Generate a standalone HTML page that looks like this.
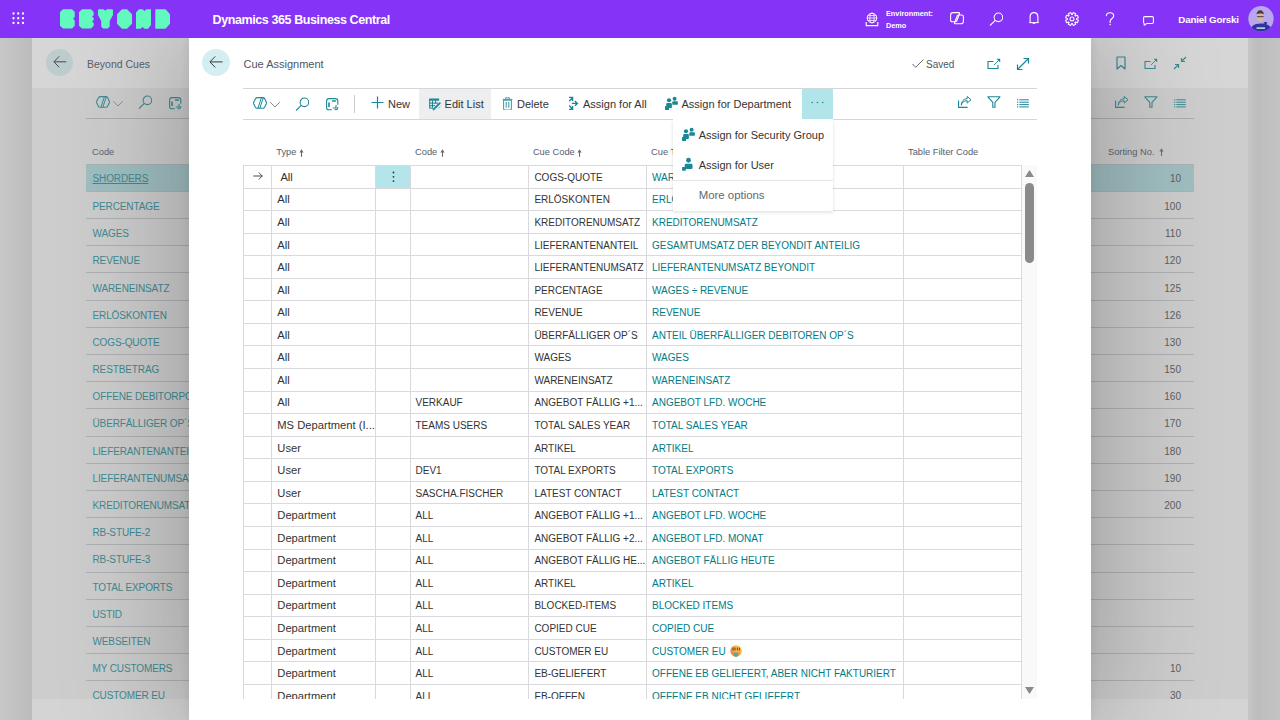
<!DOCTYPE html>
<html><head><meta charset="utf-8"><title>Cue Assignment</title>
<style>
html,body{margin:0;padding:0;width:1280px;height:720px;overflow:hidden;background:#bdbdbd;font-family:"Liberation Sans", sans-serif;}
.r{position:absolute;}
.t{position:absolute;white-space:nowrap;line-height:1;font-family:"Liberation Sans", sans-serif;}
.ar{font-size:0.85em;}
</style></head><body>
<div class="r" style="left:0px;top:38px;width:32px;height:682px;background:linear-gradient(to right,#c7c7c7,#bcbcbc);"></div>
<div class="r" style="left:1248px;top:38px;width:32px;height:682px;background:linear-gradient(to right,#c6c6c6,#bdbdbd 30%,#c3c3c3);"></div>
<div class="r" style="left:32px;top:38px;width:1216px;height:50px;background:#d6d6d6;"></div>
<div class="r" style="left:32px;top:88px;width:1216px;height:611px;background:#cdcdcd;"></div>
<div class="r" style="left:32px;top:699px;width:1216px;height:21px;background:#d4d4d4;"></div>
<div class="r" style="left:46px;top:49px;width:27px;height:27px;border-radius:50%;background:#bdcccd"></div>
<svg class="r" style="left:52.5px;top:55.5px" width="14" height="12" viewBox="0 0 14 12"><path d="M13.3 5.8H1M6.2 0.4L0.9 5.8 6.2 11.3" fill="none" stroke="#454545" stroke-width="0.95"/></svg>
<div class="t " style="left:87px;top:58.61px;font-size:10.5px;color:#5a616c;font-weight:400;">Beyond Cues</div>
<svg class="r" style="left:96px;top:96px" width="28" height="13" viewBox="0 0 28 13"><path d="M4.6,0.6 H10 Q11,0.6 11.6,1.6 L13.2,4.9 Q13.6,5.9 13.2,6.9 L11.6,10.2 Q11,11.2 10,11.2 H4 Q3,11.2 2.4,10.2 L0.8,6.9 Q0.4,5.9 0.8,4.9 L2.6,1.6 Q3.2,0.6 4.6,0.6Z" fill="none" stroke="#3b8a92" stroke-width="1.1" stroke-linejoin="round"/><path d="M8.4,0.8 L5,11 M10.3,0.9 L6.9,11" fill="none" stroke="#3b8a92" stroke-width="1"/><path d="M17.2 5.2l4.8 4.8 4.8-4.8" fill="none" stroke="#888" stroke-width="0.9"/></svg>
<svg class="r" style="left:138px;top:95px" width="14" height="14" viewBox="0 0 14 14"><circle cx="9.4" cy="5.3" r="4.3" fill="none" stroke="#3b8a92" stroke-width="1.05"/><path d="M6.3 8.4L1 13.5" stroke="#3b8a92" stroke-width="1.1"/></svg>
<svg class="r" style="left:169px;top:96.8px" width="13" height="13" viewBox="0 0 13 13"><path d="M3,0.6 H9.4 Q11.8,0.6 11.8,3 V6.8 M11.8,9.3 Q11.8,11.8 9.4,11.8 H8.6 M5.8,11.8 H3 Q0.6,11.8 0.6,9.4 V3 Q0.6,0.6 3,0.6" fill="none" stroke="#3b8a92" stroke-width="1.1"/><rect x="5.8" y="2.2" width="4.3" height="1.6" rx="0.8" fill="#3b8a92"/><rect x="2.2" y="4.3" width="1.6" height="5" rx="0.8" fill="#3b8a92"/><path d="M6.8 10H10V6.9" fill="none" stroke="#3b8a92" stroke-width="1.1"/></svg>
<div class="r" style="left:86px;top:118px;width:110px;height:1px;background:#a9acb0;"></div>
<svg class="r" style="left:1115px;top:56px" width="12" height="14" viewBox="0 0 12 14"><path d="M2 1h8v12l-4-3.5L2 13z" fill="none" stroke="#3b8a92" stroke-width="1.2" stroke-linejoin="round"/></svg>
<svg class="r" style="left:1143.5px;top:57.5px" width="14" height="12" viewBox="0 0 14 12"><path d="M6.5 3.5H1v7h10V7" fill="none" stroke="#3b8a92" stroke-width="1.1"/><path d="M7 7l5.5-5.5" fill="none" stroke="#3b8a92" stroke-width="0.9"/><path d="M9.5 0.8h3.7v3.7z" fill="#3b8a92"/></svg>
<svg class="r" style="left:1173px;top:56px" width="14" height="14" viewBox="0 0 14 14"><path d="M1 13l4.5-4.5M2 8.5h3.5V12M13 1L8.5 5.5M8.5 2v3.5H12" fill="none" stroke="#3b8a92" stroke-width="1.2"/></svg>
<svg class="r" style="left:1115px;top:96px" width="14" height="12" viewBox="0 0 14 12"><path d="M0.6 4.5v6.9h9" fill="none" stroke="#3b8a92" stroke-width="1.1"/><path d="M3.3 9.3c0.4-3 2.5-4.6 5.9-4.6v2.4l3.8-3.4L9.2 0.5v2.2C5.5 2.9 3.3 5.5 3.3 9.3z" fill="none" stroke="#3b8a92" stroke-width="1" stroke-linejoin="round"/></svg>
<svg class="r" style="left:1143.5px;top:96.3px" width="14" height="12" viewBox="0 0 14 12"><path d="M0.8 0.8h12.2L8 6.3v5H5.8v-5z" fill="none" stroke="#3b8a92" stroke-width="1.1" stroke-linejoin="round"/></svg>
<svg class="r" style="left:1174px;top:99.3px" width="12" height="9" viewBox="0 0 12 9"><rect x="0" y="0.3" width="1.3" height="1" fill="#3b8a92"/><rect x="2.3" y="0.3" width="9.5" height="1" fill="#3b8a92"/><rect x="0" y="2.7" width="1.3" height="1" fill="#3b8a92"/><rect x="2.3" y="2.7" width="9.5" height="1" fill="#3b8a92"/><rect x="0" y="5.1" width="1.3" height="1" fill="#3b8a92"/><rect x="2.3" y="5.1" width="9.5" height="1" fill="#3b8a92"/><rect x="0" y="7.4" width="1.3" height="1" fill="#3b8a92"/><rect x="2.3" y="7.4" width="9.5" height="1" fill="#3b8a92"/></svg>
<div class="r" style="left:1091px;top:118px;width:103px;height:1px;background:#a9acb0;"></div>
<div class="t " style="left:92px;top:148.13px;font-size:9.3px;color:#5e636b;font-weight:400;">Code</div>
<div class="t " style="left:1108px;top:148.13px;font-size:9.3px;color:#5e636b;font-weight:400;">Sorting No.</div>
<svg class="r" style="left:1158.5px;top:148.3px" width="5" height="8" viewBox="0 0 5 8"><path d="M2.5 7.8V2" stroke="#707070" stroke-width="1.1"/><path d="M0.4 3.4L2.5 0.3 4.6 3.4z" fill="#707070"/></svg>
<div class="r" style="left:0;top:0;width:1280px;height:699px;overflow:hidden">
<div class="r" style="left:86px;top:164px;width:1108px;height:27px;background:#a0bec1;"></div>
<div class="r" style="left:86px;top:164px;width:1108px;height:1px;background:#a9b0b4;"></div>
<div class="r" style="left:86px;top:191px;width:1108px;height:1px;background:#aeb0b3;"></div>
<div class="t " style="left:92.5px;top:173.93px;font-size:10px;color:#3f8a91;font-weight:400;text-decoration:underline;letter-spacing:-0.12px;">SHORDERS</div>
<div class="t" style="right:99px;top:173.93px;font-size:10px;color:#5f5f5f;font-weight:400;">10</div>
<div class="r" style="left:86px;top:218px;width:1108px;height:1px;background:#aeb0b3;"></div>
<div class="t " style="left:92.5px;top:201.93px;font-size:10px;color:#3f8a91;font-weight:400;letter-spacing:-0.12px;">PERCENTAGE</div>
<div class="t" style="right:99px;top:201.93px;font-size:10px;color:#5f5f5f;font-weight:400;">100</div>
<div class="r" style="left:86px;top:245px;width:1108px;height:1px;background:#aeb0b3;"></div>
<div class="t " style="left:92.5px;top:229.12px;font-size:10px;color:#3f8a91;font-weight:400;letter-spacing:-0.12px;">WAGES</div>
<div class="t" style="right:99px;top:229.12px;font-size:10px;color:#5f5f5f;font-weight:400;">110</div>
<div class="r" style="left:86px;top:272px;width:1108px;height:1px;background:#aeb0b3;"></div>
<div class="t " style="left:92.5px;top:256.31px;font-size:10px;color:#3f8a91;font-weight:400;letter-spacing:-0.12px;">REVENUE</div>
<div class="t" style="right:99px;top:256.31px;font-size:10px;color:#5f5f5f;font-weight:400;">120</div>
<div class="r" style="left:86px;top:300px;width:1108px;height:1px;background:#aeb0b3;"></div>
<div class="t " style="left:92.5px;top:283.50px;font-size:10px;color:#3f8a91;font-weight:400;letter-spacing:-0.12px;">WARENEINSATZ</div>
<div class="t" style="right:99px;top:283.50px;font-size:10px;color:#5f5f5f;font-weight:400;">125</div>
<div class="r" style="left:86px;top:327px;width:1108px;height:1px;background:#aeb0b3;"></div>
<div class="t " style="left:92.5px;top:310.69px;font-size:10px;color:#3f8a91;font-weight:400;letter-spacing:-0.12px;">ERLÖSKONTEN</div>
<div class="t" style="right:99px;top:310.69px;font-size:10px;color:#5f5f5f;font-weight:400;">126</div>
<div class="r" style="left:86px;top:354px;width:1108px;height:1px;background:#aeb0b3;"></div>
<div class="t " style="left:92.5px;top:337.88px;font-size:10px;color:#3f8a91;font-weight:400;letter-spacing:-0.12px;">COGS-QUOTE</div>
<div class="t" style="right:99px;top:337.88px;font-size:10px;color:#5f5f5f;font-weight:400;">130</div>
<div class="r" style="left:86px;top:381px;width:1108px;height:1px;background:#aeb0b3;"></div>
<div class="t " style="left:92.5px;top:365.08px;font-size:10px;color:#3f8a91;font-weight:400;letter-spacing:-0.12px;">RESTBETRAG</div>
<div class="t" style="right:99px;top:365.08px;font-size:10px;color:#5f5f5f;font-weight:400;">150</div>
<div class="r" style="left:86px;top:408px;width:1108px;height:1px;background:#aeb0b3;"></div>
<div class="t " style="left:92.5px;top:392.26px;font-size:10px;color:#3f8a91;font-weight:400;letter-spacing:-0.12px;">OFFENE DEBITORPOSTEN</div>
<div class="t" style="right:99px;top:392.26px;font-size:10px;color:#5f5f5f;font-weight:400;">160</div>
<div class="r" style="left:86px;top:436px;width:1108px;height:1px;background:#aeb0b3;"></div>
<div class="t " style="left:92.5px;top:419.46px;font-size:10px;color:#3f8a91;font-weight:400;letter-spacing:-0.12px;">ÜBERFÄLLIGER OP´S</div>
<div class="t" style="right:99px;top:419.46px;font-size:10px;color:#5f5f5f;font-weight:400;">170</div>
<div class="r" style="left:86px;top:463px;width:1108px;height:1px;background:#aeb0b3;"></div>
<div class="t " style="left:92.5px;top:446.64px;font-size:10px;color:#3f8a91;font-weight:400;letter-spacing:-0.12px;">LIEFERANTENANTEIL</div>
<div class="t" style="right:99px;top:446.64px;font-size:10px;color:#5f5f5f;font-weight:400;">180</div>
<div class="r" style="left:86px;top:490px;width:1108px;height:1px;background:#aeb0b3;"></div>
<div class="t " style="left:92.5px;top:473.84px;font-size:10px;color:#3f8a91;font-weight:400;letter-spacing:-0.12px;">LIEFERANTENUMSATZ</div>
<div class="t" style="right:99px;top:473.84px;font-size:10px;color:#5f5f5f;font-weight:400;">190</div>
<div class="r" style="left:86px;top:517px;width:1108px;height:1px;background:#aeb0b3;"></div>
<div class="t " style="left:92.5px;top:501.03px;font-size:10px;color:#3f8a91;font-weight:400;letter-spacing:-0.12px;">KREDITORENUMSATZ</div>
<div class="t" style="right:99px;top:501.03px;font-size:10px;color:#5f5f5f;font-weight:400;">200</div>
<div class="r" style="left:86px;top:544px;width:1108px;height:1px;background:#aeb0b3;"></div>
<div class="t " style="left:92.5px;top:528.22px;font-size:10px;color:#3f8a91;font-weight:400;letter-spacing:-0.12px;">RB-STUFE-2</div>
<div class="r" style="left:86px;top:572px;width:1108px;height:1px;background:#aeb0b3;"></div>
<div class="t " style="left:92.5px;top:555.41px;font-size:10px;color:#3f8a91;font-weight:400;letter-spacing:-0.12px;">RB-STUFE-3</div>
<div class="r" style="left:86px;top:599px;width:1108px;height:1px;background:#aeb0b3;"></div>
<div class="t " style="left:92.5px;top:582.60px;font-size:10px;color:#3f8a91;font-weight:400;letter-spacing:-0.12px;">TOTAL EXPORTS</div>
<div class="r" style="left:86px;top:626px;width:1108px;height:1px;background:#aeb0b3;"></div>
<div class="t " style="left:92.5px;top:609.78px;font-size:10px;color:#3f8a91;font-weight:400;letter-spacing:-0.12px;">USTID</div>
<div class="r" style="left:86px;top:653px;width:1108px;height:1px;background:#aeb0b3;"></div>
<div class="t " style="left:92.5px;top:636.98px;font-size:10px;color:#3f8a91;font-weight:400;letter-spacing:-0.12px;">WEBSEITEN</div>
<div class="r" style="left:86px;top:680px;width:1108px;height:1px;background:#aeb0b3;"></div>
<div class="t " style="left:92.5px;top:664.17px;font-size:10px;color:#3f8a91;font-weight:400;letter-spacing:-0.12px;">MY CUSTOMERS</div>
<div class="t" style="right:99px;top:664.17px;font-size:10px;color:#5f5f5f;font-weight:400;">10</div>
<div class="r" style="left:86px;top:708px;width:1108px;height:1px;background:#aeb0b3;"></div>
<div class="t " style="left:92.5px;top:691.36px;font-size:10px;color:#3f8a91;font-weight:400;letter-spacing:-0.12px;">CUSTOMER EU</div>
<div class="t" style="right:99px;top:691.36px;font-size:10px;color:#5f5f5f;font-weight:400;">30</div>
</div>
<div class="r" style="left:189px;top:38px;width:902px;height:682px;box-shadow:0 0 110px 10px rgba(0,0,0,0.25),0 0 10px rgba(0,0,0,0.07);background:#fff"></div>
<div class="r" style="left:202px;top:49px;width:28px;height:27px;border-radius:50%;background:#d5eef1"></div>
<svg class="r" style="left:209px;top:55.5px" width="14" height="12" viewBox="0 0 14 12"><path d="M13.6 5.9H1M6.3 0.4L0.9 5.9 6.3 11.5" fill="none" stroke="#333" stroke-width="0.95"/></svg>
<div class="t " style="left:243.5px;top:58.69px;font-size:11px;color:#4d5663;font-weight:400;">Cue Assignment</div>
<svg class="r" style="left:912px;top:59px" width="12" height="9" viewBox="0 0 12 9"><path d="M0.5 5l3.2 3.3L11.5 0.5" fill="none" stroke="#555" stroke-width="0.9"/></svg>
<div class="t " style="left:926px;top:60.03px;font-size:10px;color:#4d5663;font-weight:400;">Saved</div>
<svg class="r" style="left:986.5px;top:57.5px" width="14" height="12" viewBox="0 0 14 12"><path d="M6.5 3.5H1v7h10V7" fill="none" stroke="#1a8796" stroke-width="1.1"/><path d="M7 7l5.5-5.5" fill="none" stroke="#1a8796" stroke-width="0.9"/><path d="M9.5 0.8h3.7v3.7z" fill="#1a8796"/></svg>
<svg class="r" style="left:1016px;top:57px" width="14" height="14" viewBox="0 0 14 14"><path d="M1.5 12.5l11-11M7.5 1.5h5v5M1.5 7.5v5h5" fill="none" stroke="#1a8796" stroke-width="1.2"/></svg>
<div class="r" style="left:243px;top:88px;width:794px;height:1px;background:#d3d6da;"></div>
<div class="r" style="left:243px;top:119px;width:794px;height:1px;background:#d3d6da;"></div>
<svg class="r" style="left:253px;top:97px" width="28" height="13" viewBox="0 0 28 13"><path d="M4.6,0.6 H10 Q11,0.6 11.6,1.6 L13.2,4.9 Q13.6,5.9 13.2,6.9 L11.6,10.2 Q11,11.2 10,11.2 H4 Q3,11.2 2.4,10.2 L0.8,6.9 Q0.4,5.9 0.8,4.9 L2.6,1.6 Q3.2,0.6 4.6,0.6Z" fill="none" stroke="#1a8796" stroke-width="1.1" stroke-linejoin="round"/><path d="M8.4,0.8 L5,11 M10.3,0.9 L6.9,11" fill="none" stroke="#1a8796" stroke-width="1"/><path d="M17.2 5.2l4.8 4.8 4.8-4.8" fill="none" stroke="#777" stroke-width="0.9"/></svg>
<svg class="r" style="left:295px;top:96.5px" width="14" height="14" viewBox="0 0 14 14"><circle cx="9.4" cy="5.3" r="4.3" fill="none" stroke="#1a8796" stroke-width="1.05"/><path d="M6.3 8.4L1 13.5" stroke="#1a8796" stroke-width="1.1"/></svg>
<svg class="r" style="left:326px;top:98px" width="13" height="13" viewBox="0 0 13 13"><path d="M3,0.6 H9.4 Q11.8,0.6 11.8,3 V6.8 M11.8,9.3 Q11.8,11.8 9.4,11.8 H8.6 M5.8,11.8 H3 Q0.6,11.8 0.6,9.4 V3 Q0.6,0.6 3,0.6" fill="none" stroke="#1a8796" stroke-width="1.1"/><rect x="5.8" y="2.2" width="4.3" height="1.6" rx="0.8" fill="#1a8796"/><rect x="2.2" y="4.3" width="1.6" height="5" rx="0.8" fill="#1a8796"/><path d="M6.8 10H10V6.9" fill="none" stroke="#1a8796" stroke-width="1.1"/></svg>
<div class="r" style="left:354px;top:95px;width:1px;height:18px;background:#c8cbcf;"></div>
<svg class="r" style="left:371px;top:96px" width="13" height="13" viewBox="0 0 13 13"><path d="M6.5 0.5v12M0.5 6.5h12" stroke="#1a8796" stroke-width="1.2"/></svg>
<div class="t " style="left:388px;top:98.99px;font-size:11px;color:#333;font-weight:400;">New</div>
<div class="r" style="left:419px;top:89px;width:72px;height:30px;background:#eceef0;"></div>
<svg class="r" style="left:426px;top:95px" width="18" height="17" viewBox="0 0 18 17"><rect x="3.1" y="3.5" width="10" height="2.2" fill="#1a8796"/><path d="M3.7 5V13.3M6.5 5.5V13.3M9.6 5.5V8.6M3.2 8.1H12M3.2 10.6H9M3.2 13H7" stroke="#1a8796" stroke-width="1" fill="none"/><path d="M7.6 14.4L13.8 8.2" stroke="#1a8796" stroke-width="1.9" stroke-linecap="round"/><path d="M12.3 13.5L14.2 11.6" stroke="#1a8796" stroke-width="1" opacity="0.6"/></svg>
<div class="t " style="left:444.6px;top:98.99px;font-size:11px;color:#333;font-weight:400;">Edit List</div>
<svg class="r" style="left:501.5px;top:96.5px" width="11" height="13.5" viewBox="0 0 11 13.5"><path d="M0.6 2.4h9.8M3.6 2.2V0.8h3.8v1.4" fill="none" stroke="#3f9ea8" stroke-width="1"/><path d="M1.6 3.2h7.8v8.3q0 1.4-1.4 1.4H3q-1.4 0-1.4-1.4z" fill="none" stroke="#3f9ea8" stroke-width="1.05"/><path d="M4.2 5v5.8M6.8 5v5.8" stroke="#3f9ea8" stroke-width="1.1"/></svg>
<div class="t " style="left:517px;top:98.99px;font-size:11px;color:#333;font-weight:400;">Delete</div>
<svg class="r" style="left:565px;top:94px" width="16" height="18" viewBox="0 0 16 18"><path d="M4.3 7.3L7.4 3.6M4.1 3.4H7.6V6.9M6.9 9.4H12.3M9.9 7L12.4 9.4 9.9 11.8M4.3 11.5L7.4 15.2M4.1 15.4H7.6V11.9" fill="none" stroke="#1a8796" stroke-width="1.35"/></svg>
<div class="t " style="left:583px;top:98.99px;font-size:11px;color:#333;font-weight:400;">Assign for All</div>
<svg class="r" style="left:664px;top:96px" width="15" height="15" viewBox="0 0 15 15"><circle cx="5" cy="4.25" r="2.1" fill="#1a8796"/><path d="M2.2 7.9Q2.2 7 3.2 7H6.9Q7.9 7 7.9 8V11.2Q7.9 12 7 12H2.2z" fill="#1a8796"/><rect x="1" y="10" width="4" height="3.9" rx="0.5" fill="#1a8796"/><circle cx="10.6" cy="2.75" r="2" fill="#1a8796"/><path d="M8.3 6.2Q8.3 5.25 9.3 5.25H12.9Q13.9 5.25 13.9 6.2V7.9Q13.9 8.75 13 8.75H8.3z" fill="#1a8796"/></svg>
<div class="t " style="left:681.5px;top:98.99px;font-size:11px;color:#333;font-weight:400;">Assign for Department</div>
<div class="r" style="left:802px;top:89px;width:31px;height:30px;background:#b2e5ea;"></div>
<svg class="r" style="left:811px;top:101px" width="13" height="3" viewBox="0 0 13 3"><circle cx="1.2" cy="1.5" r="0.8" fill="#1a8796"/><circle cx="6.5" cy="1.5" r="0.8" fill="#1a8796"/><circle cx="11.8" cy="1.5" r="0.8" fill="#1a8796"/></svg>
<svg class="r" style="left:958px;top:96px" width="14" height="12" viewBox="0 0 14 12"><path d="M0.6 4.5v6.9h9" fill="none" stroke="#1a8796" stroke-width="1.1"/><path d="M3.3 9.3c0.4-3 2.5-4.6 5.9-4.6v2.4l3.8-3.4L9.2 0.5v2.2C5.5 2.9 3.3 5.5 3.3 9.3z" fill="none" stroke="#1a8796" stroke-width="1" stroke-linejoin="round"/></svg>
<svg class="r" style="left:986.5px;top:96.3px" width="14" height="12" viewBox="0 0 14 12"><path d="M0.8 0.8h12.2L8 6.3v5H5.8v-5z" fill="none" stroke="#1a8796" stroke-width="1.1" stroke-linejoin="round"/></svg>
<svg class="r" style="left:1017px;top:99.3px" width="12" height="9" viewBox="0 0 12 9"><rect x="0" y="0.3" width="1.3" height="1" fill="#1a8796"/><rect x="2.3" y="0.3" width="9.5" height="1" fill="#1a8796"/><rect x="0" y="2.7" width="1.3" height="1" fill="#1a8796"/><rect x="2.3" y="2.7" width="9.5" height="1" fill="#1a8796"/><rect x="0" y="5.1" width="1.3" height="1" fill="#1a8796"/><rect x="2.3" y="5.1" width="9.5" height="1" fill="#1a8796"/><rect x="0" y="7.4" width="1.3" height="1" fill="#1a8796"/><rect x="2.3" y="7.4" width="9.5" height="1" fill="#1a8796"/></svg>
<div class="t " style="left:276.3px;top:148.43px;font-size:9.3px;color:#545e6b;font-weight:400;">Type</div>
<svg class="r" style="left:298.5px;top:148.5px" width="5" height="8" viewBox="0 0 5 8"><path d="M2.5 7.8V2" stroke="#6a6a6a" stroke-width="1.1"/><path d="M0.4 3.4L2.5 0.3 4.6 3.4z" fill="#6a6a6a"/></svg>
<div class="t " style="left:415px;top:148.43px;font-size:9.3px;color:#545e6b;font-weight:400;">Code</div>
<svg class="r" style="left:440px;top:148.5px" width="5" height="8" viewBox="0 0 5 8"><path d="M2.5 7.8V2" stroke="#6a6a6a" stroke-width="1.1"/><path d="M0.4 3.4L2.5 0.3 4.6 3.4z" fill="#6a6a6a"/></svg>
<div class="t " style="left:532.9px;top:148.43px;font-size:9.3px;color:#545e6b;font-weight:400;">Cue Code</div>
<svg class="r" style="left:576.8px;top:148.5px" width="5" height="8" viewBox="0 0 5 8"><path d="M2.5 7.8V2" stroke="#6a6a6a" stroke-width="1.1"/><path d="M0.4 3.4L2.5 0.3 4.6 3.4z" fill="#6a6a6a"/></svg>
<div class="t " style="left:651px;top:148.43px;font-size:9.3px;color:#545e6b;font-weight:400;">Cue Title</div>
<div class="t " style="left:908px;top:148.43px;font-size:9.3px;color:#545e6b;font-weight:400;">Table Filter Code</div>
<div class="r" style="left:0;top:0;width:1280px;height:699px;overflow:hidden">
<div class="r" style="left:376px;top:166px;width:34px;height:22px;background:#b3e5ea;"></div>
<svg class="r" style="left:392px;top:171px" width="3" height="12" viewBox="0 0 3 12"><circle cx="1.5" cy="1.5" r="0.9" fill="#333"/><circle cx="1.5" cy="5.8" r="0.9" fill="#333"/><circle cx="1.5" cy="10.1" r="0.9" fill="#333"/></svg>
<svg class="r" style="left:252.5px;top:172px" width="10" height="8" viewBox="0 0 10 8"><path d="M0.3 4h9M5.8 0.5L9.3 4 5.8 7.5" fill="none" stroke="#444" stroke-width="0.95"/></svg>
<div class="r" style="left:243px;top:165px;width:778px;height:1px;background:#d9d9de;"></div>
<div class="r" style="left:243px;top:188px;width:778px;height:1px;background:#d9d9de;"></div>
<div class="r" style="left:243px;top:210px;width:778px;height:1px;background:#d9d9de;"></div>
<div class="r" style="left:243px;top:233px;width:778px;height:1px;background:#d9d9de;"></div>
<div class="r" style="left:243px;top:255px;width:778px;height:1px;background:#d9d9de;"></div>
<div class="r" style="left:243px;top:278px;width:778px;height:1px;background:#d9d9de;"></div>
<div class="r" style="left:243px;top:300px;width:778px;height:1px;background:#d9d9de;"></div>
<div class="r" style="left:243px;top:323px;width:778px;height:1px;background:#d9d9de;"></div>
<div class="r" style="left:243px;top:345px;width:778px;height:1px;background:#d9d9de;"></div>
<div class="r" style="left:243px;top:368px;width:778px;height:1px;background:#d9d9de;"></div>
<div class="r" style="left:243px;top:391px;width:778px;height:1px;background:#d9d9de;"></div>
<div class="r" style="left:243px;top:413px;width:778px;height:1px;background:#d9d9de;"></div>
<div class="r" style="left:243px;top:436px;width:778px;height:1px;background:#d9d9de;"></div>
<div class="r" style="left:243px;top:458px;width:778px;height:1px;background:#d9d9de;"></div>
<div class="r" style="left:243px;top:481px;width:778px;height:1px;background:#d9d9de;"></div>
<div class="r" style="left:243px;top:503px;width:778px;height:1px;background:#d9d9de;"></div>
<div class="r" style="left:243px;top:526px;width:778px;height:1px;background:#d9d9de;"></div>
<div class="r" style="left:243px;top:549px;width:778px;height:1px;background:#d9d9de;"></div>
<div class="r" style="left:243px;top:571px;width:778px;height:1px;background:#d9d9de;"></div>
<div class="r" style="left:243px;top:594px;width:778px;height:1px;background:#d9d9de;"></div>
<div class="r" style="left:243px;top:616px;width:778px;height:1px;background:#d9d9de;"></div>
<div class="r" style="left:243px;top:639px;width:778px;height:1px;background:#d9d9de;"></div>
<div class="r" style="left:243px;top:661px;width:778px;height:1px;background:#d9d9de;"></div>
<div class="r" style="left:243px;top:684px;width:778px;height:1px;background:#d9d9de;"></div>
<div class="r" style="left:243px;top:706px;width:778px;height:1px;background:#d9d9de;"></div>
<div class="r" style="left:243px;top:165px;width:1px;height:540px;background:#d9d9de;"></div>
<div class="r" style="left:271px;top:165px;width:1px;height:540px;background:#d9d9de;"></div>
<div class="r" style="left:375px;top:165px;width:1px;height:540px;background:#d9d9de;"></div>
<div class="r" style="left:410px;top:165px;width:1px;height:540px;background:#d9d9de;"></div>
<div class="r" style="left:528px;top:165px;width:1px;height:540px;background:#d9d9de;"></div>
<div class="r" style="left:646px;top:165px;width:1px;height:540px;background:#d9d9de;"></div>
<div class="r" style="left:903px;top:165px;width:1px;height:540px;background:#d9d9de;"></div>
<div class="r" style="left:1021px;top:165px;width:1px;height:540px;background:#d9d9de;"></div>
<div class="t " style="left:280.4px;top:171.82px;font-size:11.2px;color:#333;font-weight:400;">All</div>
<div class="t " style="left:534.4px;top:172.84px;font-size:10px;color:#333;font-weight:400;">COGS-QUOTE</div>
<div class="t " style="left:652px;top:172.84px;font-size:10px;color:#007b86;font-weight:400;">WARENEINSATZ</div>
<div class="t " style="left:277.3px;top:194.38px;font-size:11.2px;color:#333;font-weight:400;">All</div>
<div class="t " style="left:534.4px;top:195.40px;font-size:10px;color:#333;font-weight:400;">ERLÖSKONTEN</div>
<div class="t " style="left:652px;top:195.40px;font-size:10px;color:#007b86;font-weight:400;">ERLÖSKONTEN</div>
<div class="t " style="left:277.3px;top:216.94px;font-size:11.2px;color:#333;font-weight:400;">All</div>
<div class="t " style="left:534.4px;top:217.96px;font-size:10px;color:#333;font-weight:400;">KREDITORENUMSATZ</div>
<div class="t " style="left:652px;top:217.96px;font-size:10px;color:#007b86;font-weight:400;">KREDITORENUMSATZ</div>
<div class="t " style="left:277.3px;top:239.50px;font-size:11.2px;color:#333;font-weight:400;">All</div>
<div class="t " style="left:534.4px;top:240.52px;font-size:10px;color:#333;font-weight:400;">LIEFERANTENANTEIL</div>
<div class="t " style="left:652px;top:240.52px;font-size:10px;color:#007b86;font-weight:400;">GESAMTUMSATZ DER BEYONDIT ANTEILIG</div>
<div class="t " style="left:277.3px;top:262.06px;font-size:11.2px;color:#333;font-weight:400;">All</div>
<div class="t " style="left:534.4px;top:263.08px;font-size:10px;color:#333;font-weight:400;">LIEFERANTENUMSATZ</div>
<div class="t " style="left:652px;top:263.08px;font-size:10px;color:#007b86;font-weight:400;">LIEFERANTENUMSATZ BEYONDIT</div>
<div class="t " style="left:277.3px;top:284.62px;font-size:11.2px;color:#333;font-weight:400;">All</div>
<div class="t " style="left:534.4px;top:285.64px;font-size:10px;color:#333;font-weight:400;">PERCENTAGE</div>
<div class="t " style="left:652px;top:285.64px;font-size:10px;color:#007b86;font-weight:400;">WAGES ÷ REVENUE</div>
<div class="t " style="left:277.3px;top:307.18px;font-size:11.2px;color:#333;font-weight:400;">All</div>
<div class="t " style="left:534.4px;top:308.19px;font-size:10px;color:#333;font-weight:400;">REVENUE</div>
<div class="t " style="left:652px;top:308.19px;font-size:10px;color:#007b86;font-weight:400;">REVENUE</div>
<div class="t " style="left:277.3px;top:329.74px;font-size:11.2px;color:#333;font-weight:400;">All</div>
<div class="t " style="left:534.4px;top:330.76px;font-size:10px;color:#333;font-weight:400;">ÜBERFÄLLIGER OP´S</div>
<div class="t " style="left:652px;top:330.76px;font-size:10px;color:#007b86;font-weight:400;">ANTEIL ÜBERFÄLLIGER DEBITOREN OP´S</div>
<div class="t " style="left:277.3px;top:352.30px;font-size:11.2px;color:#333;font-weight:400;">All</div>
<div class="t " style="left:534.4px;top:353.31px;font-size:10px;color:#333;font-weight:400;">WAGES</div>
<div class="t " style="left:652px;top:353.31px;font-size:10px;color:#007b86;font-weight:400;">WAGES</div>
<div class="t " style="left:277.3px;top:374.86px;font-size:11.2px;color:#333;font-weight:400;">All</div>
<div class="t " style="left:534.4px;top:375.88px;font-size:10px;color:#333;font-weight:400;">WARENEINSATZ</div>
<div class="t " style="left:652px;top:375.88px;font-size:10px;color:#007b86;font-weight:400;">WARENEINSATZ</div>
<div class="t " style="left:277.3px;top:397.42px;font-size:11.2px;color:#333;font-weight:400;">All</div>
<div class="t " style="left:415.5px;top:398.44px;font-size:10px;color:#333;font-weight:400;">VERKAUF</div>
<div class="t " style="left:534.4px;top:398.44px;font-size:10px;color:#333;font-weight:400;">ANGEBOT FÄLLIG +1...</div>
<div class="t " style="left:652px;top:398.44px;font-size:10px;color:#007b86;font-weight:400;">ANGEBOT LFD. WOCHE</div>
<div class="t " style="left:277.3px;top:419.98px;font-size:11.2px;color:#333;font-weight:400;">MS Department (I...</div>
<div class="t " style="left:415.5px;top:421.00px;font-size:10px;color:#333;font-weight:400;">TEAMS USERS</div>
<div class="t " style="left:534.4px;top:421.00px;font-size:10px;color:#333;font-weight:400;">TOTAL SALES YEAR</div>
<div class="t " style="left:652px;top:421.00px;font-size:10px;color:#007b86;font-weight:400;">TOTAL SALES YEAR</div>
<div class="t " style="left:277.3px;top:442.54px;font-size:11.2px;color:#333;font-weight:400;">User</div>
<div class="t " style="left:534.4px;top:443.56px;font-size:10px;color:#333;font-weight:400;">ARTIKEL</div>
<div class="t " style="left:652px;top:443.56px;font-size:10px;color:#007b86;font-weight:400;">ARTIKEL</div>
<div class="t " style="left:277.3px;top:465.10px;font-size:11.2px;color:#333;font-weight:400;">User</div>
<div class="t " style="left:415.5px;top:466.12px;font-size:10px;color:#333;font-weight:400;">DEV1</div>
<div class="t " style="left:534.4px;top:466.12px;font-size:10px;color:#333;font-weight:400;">TOTAL EXPORTS</div>
<div class="t " style="left:652px;top:466.12px;font-size:10px;color:#007b86;font-weight:400;">TOTAL EXPORTS</div>
<div class="t " style="left:277.3px;top:487.66px;font-size:11.2px;color:#333;font-weight:400;">User</div>
<div class="t " style="left:415.5px;top:488.68px;font-size:10px;color:#333;font-weight:400;">SASCHA.FISCHER</div>
<div class="t " style="left:534.4px;top:488.68px;font-size:10px;color:#333;font-weight:400;">LATEST CONTACT</div>
<div class="t " style="left:652px;top:488.68px;font-size:10px;color:#007b86;font-weight:400;">LATEST CONTACT</div>
<div class="t " style="left:277.3px;top:510.22px;font-size:11.2px;color:#333;font-weight:400;">Department</div>
<div class="t " style="left:415.5px;top:511.24px;font-size:10px;color:#333;font-weight:400;">ALL</div>
<div class="t " style="left:534.4px;top:511.24px;font-size:10px;color:#333;font-weight:400;">ANGEBOT FÄLLIG +1...</div>
<div class="t " style="left:652px;top:511.24px;font-size:10px;color:#007b86;font-weight:400;">ANGEBOT LFD. WOCHE</div>
<div class="t " style="left:277.3px;top:532.78px;font-size:11.2px;color:#333;font-weight:400;">Department</div>
<div class="t " style="left:415.5px;top:533.79px;font-size:10px;color:#333;font-weight:400;">ALL</div>
<div class="t " style="left:534.4px;top:533.79px;font-size:10px;color:#333;font-weight:400;">ANGEBOT FÄLLIG +2...</div>
<div class="t " style="left:652px;top:533.79px;font-size:10px;color:#007b86;font-weight:400;">ANGEBOT LFD. MONAT</div>
<div class="t " style="left:277.3px;top:555.34px;font-size:11.2px;color:#333;font-weight:400;">Department</div>
<div class="t " style="left:415.5px;top:556.35px;font-size:10px;color:#333;font-weight:400;">ALL</div>
<div class="t " style="left:534.4px;top:556.35px;font-size:10px;color:#333;font-weight:400;">ANGEBOT FÄLLIG HE...</div>
<div class="t " style="left:652px;top:556.35px;font-size:10px;color:#007b86;font-weight:400;">ANGEBOT FÄLLIG HEUTE</div>
<div class="t " style="left:277.3px;top:577.90px;font-size:11.2px;color:#333;font-weight:400;">Department</div>
<div class="t " style="left:415.5px;top:578.91px;font-size:10px;color:#333;font-weight:400;">ALL</div>
<div class="t " style="left:534.4px;top:578.91px;font-size:10px;color:#333;font-weight:400;">ARTIKEL</div>
<div class="t " style="left:652px;top:578.91px;font-size:10px;color:#007b86;font-weight:400;">ARTIKEL</div>
<div class="t " style="left:277.3px;top:600.46px;font-size:11.2px;color:#333;font-weight:400;">Department</div>
<div class="t " style="left:415.5px;top:601.48px;font-size:10px;color:#333;font-weight:400;">ALL</div>
<div class="t " style="left:534.4px;top:601.48px;font-size:10px;color:#333;font-weight:400;">BLOCKED-ITEMS</div>
<div class="t " style="left:652px;top:601.48px;font-size:10px;color:#007b86;font-weight:400;">BLOCKED ITEMS</div>
<div class="t " style="left:277.3px;top:623.02px;font-size:11.2px;color:#333;font-weight:400;">Department</div>
<div class="t " style="left:415.5px;top:624.03px;font-size:10px;color:#333;font-weight:400;">ALL</div>
<div class="t " style="left:534.4px;top:624.03px;font-size:10px;color:#333;font-weight:400;">COPIED CUE</div>
<div class="t " style="left:652px;top:624.03px;font-size:10px;color:#007b86;font-weight:400;">COPIED CUE</div>
<div class="t " style="left:277.3px;top:645.58px;font-size:11.2px;color:#333;font-weight:400;">Department</div>
<div class="t " style="left:415.5px;top:646.59px;font-size:10px;color:#333;font-weight:400;">ALL</div>
<div class="t " style="left:534.4px;top:646.59px;font-size:10px;color:#333;font-weight:400;">CUSTOMER EU</div>
<svg class="r" style="left:730px;top:645px" width="12" height="12" viewBox="0 0 12 12"><defs><radialGradient id="em" cx="0.65" cy="0.3" r="0.8"><stop offset="0" stop-color="#ffd84a"/><stop offset="1" stop-color="#f07a30"/></radialGradient></defs><circle cx="6" cy="6" r="5.7" fill="url(#em)"/><path d="M3 2.5v3M5 2.5v3M7.3 2.5v3M9.3 2.5v3" stroke="#5a3a20" stroke-width="1"/><rect x="3" y="7.3" width="6" height="1" fill="#e070b0"/><path d="M4 8.3h4v1.5c0 1.5-0.8 2-2 2s-2-0.5-2-2z" fill="#3cb878"/></svg>
<div class="t " style="left:652px;top:646.59px;font-size:10px;color:#007b86;font-weight:400;">CUSTOMER EU</div>
<div class="t " style="left:277.3px;top:668.14px;font-size:11.2px;color:#333;font-weight:400;">Department</div>
<div class="t " style="left:415.5px;top:669.15px;font-size:10px;color:#333;font-weight:400;">ALL</div>
<div class="t " style="left:534.4px;top:669.15px;font-size:10px;color:#333;font-weight:400;">EB-GELIEFERT</div>
<div class="t " style="left:652px;top:669.15px;font-size:10px;color:#007b86;font-weight:400;">OFFENE EB GELIEFERT, ABER NICHT FAKTURIERT</div>
<div class="t " style="left:277.3px;top:690.70px;font-size:11.2px;color:#333;font-weight:400;">Department</div>
<div class="t " style="left:415.5px;top:691.72px;font-size:10px;color:#333;font-weight:400;">ALL</div>
<div class="t " style="left:534.4px;top:691.72px;font-size:10px;color:#333;font-weight:400;">EB-OFFEN</div>
<div class="t " style="left:652px;top:691.72px;font-size:10px;color:#007b86;font-weight:400;">OFFENE EB NICHT GELIEFERT</div>
</div>
<div class="r" style="left:1022px;top:165px;width:15px;height:534px;background:#f9f9f9;"></div>
<svg class="r" style="left:1024px;top:169px" width="11" height="9" viewBox="0 0 11 9"><path d="M5.5 1L10 8H1z" fill="#8a8a8a"/></svg>
<div class="r" style="left:1025px;top:182.5px;width:9.2px;height:80.5px;background:#8a8a8a;border-radius:4.6px;"></div>
<svg class="r" style="left:1024px;top:686px" width="11" height="9" viewBox="0 0 11 9"><path d="M5.5 8L10 1H1z" fill="#8a8a8a"/></svg>
<div class="r" style="left:673px;top:119px;width:160px;height:92px;background:#fff;box-shadow:0 1.6px 3.6px rgba(0,0,0,0.13),0 0.3px 0.9px rgba(0,0,0,0.11)"></div>
<svg class="r" style="left:680.8px;top:127px" width="15" height="15" viewBox="0 0 15 15"><circle cx="5" cy="4.25" r="2.1" fill="#1a8796"/><path d="M2.2 7.9Q2.2 7 3.2 7H6.9Q7.9 7 7.9 8V11.2Q7.9 12 7 12H2.2z" fill="#1a8796"/><rect x="1" y="10" width="4" height="3.9" rx="0.5" fill="#1a8796"/><circle cx="10.6" cy="2.75" r="2" fill="#1a8796"/><path d="M8.3 6.2Q8.3 5.25 9.3 5.25H12.9Q13.9 5.25 13.9 6.2V7.9Q13.9 8.75 13 8.75H8.3z" fill="#1a8796"/></svg>
<div class="t " style="left:698.7px;top:130.19px;font-size:11px;color:#333;font-weight:400;">Assign for Security Group</div>
<svg class="r" style="left:680px;top:154px" width="15" height="18" viewBox="0 0 15 18"><circle cx="8.5" cy="6.25" r="2.4" fill="#1a8796"/><path d="M4.75 11Q4.75 9.75 6 9.75H11.3Q12.5 9.75 12.5 11V14Q12.5 15 11.5 15H4.75z" fill="#1a8796"/><rect x="2.1" y="13" width="3.7" height="3.75" rx="0.5" fill="#1a8796"/></svg>
<div class="t " style="left:698.7px;top:159.79px;font-size:11px;color:#333;font-weight:400;">Assign for User</div>
<div class="r" style="left:673px;top:180px;width:160px;height:1px;background:#e6e6e6;"></div>
<div class="t " style="left:698.7px;top:190.35px;font-size:11.4px;color:#62676e;font-weight:400;">More options</div>
<div class="r" style="left:0px;top:0px;width:1280px;height:38px;background:#8533f6;"></div>
<svg class="r" style="left:12px;top:12px" width="13" height="13" viewBox="0 0 13 13"><circle cx="1.5" cy="1.5" r="1.15" fill="#fff"/><circle cx="1.5" cy="6.25" r="1.15" fill="#fff"/><circle cx="1.5" cy="11.0" r="1.15" fill="#fff"/><circle cx="6.25" cy="1.5" r="1.15" fill="#fff"/><circle cx="6.25" cy="6.25" r="1.15" fill="#fff"/><circle cx="6.25" cy="11.0" r="1.15" fill="#fff"/><circle cx="11.0" cy="1.5" r="1.15" fill="#fff"/><circle cx="11.0" cy="6.25" r="1.15" fill="#fff"/><circle cx="11.0" cy="11.0" r="1.15" fill="#fff"/></svg>
<svg class="r" style="left:0;top:0" width="180" height="38" viewBox="0 0 180 38"><g fill="#62f9bf">
<path d="M60,12.1 L63,9.2 L72,9.2 L74.75,12 L74.75,17 L73.1,18.7 L74.75,20.4 L74.75,25.7 L72,28.5 L63,28.5 L60,25.7 Z"/>
<path d="M79,12.1 L82,9.2 L91,9.2 L93.7,12 L93.7,15.3 L92.1,16.6 L93.7,18 L93.7,20.1 L92.1,21.5 L93.7,22.9 L93.7,25.7 L91,28.5 L82,28.5 L79,25.7 Z"/>
<path d="M98,10 L98.8,9.2 L103.6,9.2 L105.2,10.8 L106.8,9.2 L112.2,9.2 L113,10 L113,15.1 L109.7,21 L109.7,26.6 L107.8,28.5 L103.1,28.5 L101.2,26.6 L101.2,21 L98,15.1 Z"/>
<path d="M122,9.25 L127,9.25 L132,14.25 L132,23.75 L127,28.75 L122,28.75 L117,23.75 L117,14.25 Z"/>
<path d="M139,9.25 L142.5,9.25 L144.5,11 L146.5,9.25 L151,9.25 L151,25 L148,28.75 L144.5,28.75 L142.5,27 L140.5,28.75 L136,28.75 L136,12.5 Z"/>
<path d="M155.25,9.25 L165.5,9.25 L170,14.25 L170,23.75 L165.5,28.75 L155.25,28.75 Z"/>
</g></svg>
<div class="t " style="left:212.5px;top:13.82px;font-size:12.5px;color:#fff;font-weight:700;letter-spacing:-0.4px;">Dynamics 365 Business Central</div>
<svg class="r" style="left:865px;top:11px" width="14" height="16" viewBox="0 0 14 16"><circle cx="7" cy="7" r="4.8" fill="none" stroke="#fff" stroke-width="1"/><ellipse cx="7" cy="7" rx="2.1" ry="4.8" fill="none" stroke="#fff" stroke-width="0.8"/><path d="M2.2 7h9.6M2.8 4.6h8.4M2.8 9.4h8.4" stroke="#fff" stroke-width="0.8"/><path d="M1.2 11v3.6h11.6V11" fill="none" stroke="#fff" stroke-width="1.1"/></svg>
<div class="t " style="left:886px;top:10.12px;font-size:7.3px;color:#fff;font-weight:700;">Environment:</div>
<div class="t " style="left:886px;top:21.62px;font-size:7.3px;color:#fff;font-weight:700;">Demo</div>
<svg class="r" style="left:950px;top:12px" width="14" height="13" viewBox="0 0 14 13"><path d="M3,0.6 H8.8 Q9.9,0.6 9.5,1.7 L6.8,8.8 Q6.4,9.8 5.3,9.8 H2.2 Q0.6,9.8 0.6,8.2 V3.2 Q0.6,0.6 3,0.6Z" fill="none" stroke="#fff" stroke-width="1.1" stroke-linejoin="round"/><path d="M8.7,3 H11.8 Q13.4,3 13.4,4.6 V9.2 Q13.4,11.8 11,11.8 H5.2 Q4.1,11.8 4.5,10.7 L7.2,4 Q7.6,3 8.7,3Z" fill="none" stroke="#fff" stroke-width="1.1" stroke-linejoin="round"/></svg>
<svg class="r" style="left:989px;top:12px" width="14" height="14" viewBox="0 0 14 14"><circle cx="9.4" cy="5.3" r="4.3" fill="none" stroke="#fff" stroke-width="1.05"/><path d="M6.3 8.4L1 13.5" stroke="#fff" stroke-width="1.1"/></svg>
<svg class="r" style="left:1029px;top:12px" width="10" height="13" viewBox="0 0 10 13"><path d="M1.1 10.3V5Q1.1 0.6 5 0.6T8.9 5V10.3" fill="none" stroke="#fff" stroke-width="1.1"/><path d="M0.3 10.6H9.7" stroke="#fff" stroke-width="1.1"/><path d="M3.4 11.1Q5 13.3 6.6 11.1z" fill="#fff"/></svg>
<svg class="r" style="left:1065px;top:11.5px" width="14" height="14" viewBox="0 0 14 14"><path d="M7.37,2.52 L8.18,0.61 L10.68,1.64 L9.91,3.56 L10.44,4.09 L12.36,3.32 L13.39,5.82 L11.48,6.63 L11.48,7.37 L13.39,8.18 L12.36,10.68 L10.44,9.91 L9.91,10.44 L10.68,12.36 L8.18,13.39 L7.37,11.48 L6.63,11.48 L5.82,13.39 L3.32,12.36 L4.09,10.44 L3.56,9.91 L1.64,10.68 L0.61,8.18 L2.52,7.37 L2.52,6.63 L0.61,5.82 L1.64,3.32 L3.56,4.09 L4.09,3.56 L3.32,1.64 L5.82,0.61 L6.63,2.52Z" fill="none" stroke="#fff" stroke-width="1.05" stroke-linejoin="round"/><circle cx="7" cy="7" r="2" fill="none" stroke="#fff" stroke-width="1.05"/></svg>
<svg class="r" style="left:1105px;top:12px" width="10" height="14" viewBox="0 0 10 14"><path d="M1.3 3.6C1.5 1.8 3 0.7 5 0.7c2.2 0 3.7 1.3 3.7 3.1 0 1.4-0.8 2.2-1.9 3-1.1 0.8-1.7 1.4-1.7 2.8v0.8" fill="none" stroke="#fff" stroke-width="1.1" stroke-linecap="round"/><circle cx="5.1" cy="12.6" r="0.75" fill="#fff"/></svg>
<svg class="r" style="left:1143px;top:15.5px" width="11" height="10" viewBox="0 0 11 10"><path d="M1.8 0.6h7.4q1.2 0 1.2 1.2v4.4q0 1.2-1.2 1.2H4L1.2 9.3V7.4Q0.6 7.2 0.6 6.2V1.8q0-1.2 1.2-1.2z" fill="none" stroke="#fff" stroke-width="1.05" stroke-linejoin="round"/></svg>
<div class="t " style="left:1178.3px;top:15.20px;font-size:9.8px;color:#fff;font-weight:700;letter-spacing:-0.2px;">Daniel Gorski</div>
<svg class="r" style="left:1248px;top:6px" width="26" height="26" viewBox="0 0 26 26"><defs><clipPath id="av"><circle cx="13" cy="12.8" r="12.7"/></clipPath></defs>
<circle cx="13" cy="12.8" r="12.7" fill="#b8a6ef"/>
<g clip-path="url(#av)"><path d="M1.5 27c0.5-6 3.5-9.5 11.5-9.5s11 3.5 11.5 9.5z" fill="#2d35a3"/><path d="M15.5 16.5c1.5-0.8 3-0.8 4 0.3l-2 2z" fill="#232a80"/><ellipse cx="12.2" cy="10.8" rx="3.6" ry="5" fill="#d8b3a5"/><path d="M8.6 8.5c0-2.5 1.6-4.2 3.6-4.2s3.6 1.7 3.6 4.2c-1-1.2-6.2-1.2-7.2 0z" fill="#4a3a3a"/><rect x="9" y="10" width="6.6" height="1.2" fill="#3a3a4a" opacity="0.8"/><rect x="8.5" y="21.3" width="8.5" height="1.6" fill="#d8f0e0" opacity="0.85"/></g></svg>
</body></html>
